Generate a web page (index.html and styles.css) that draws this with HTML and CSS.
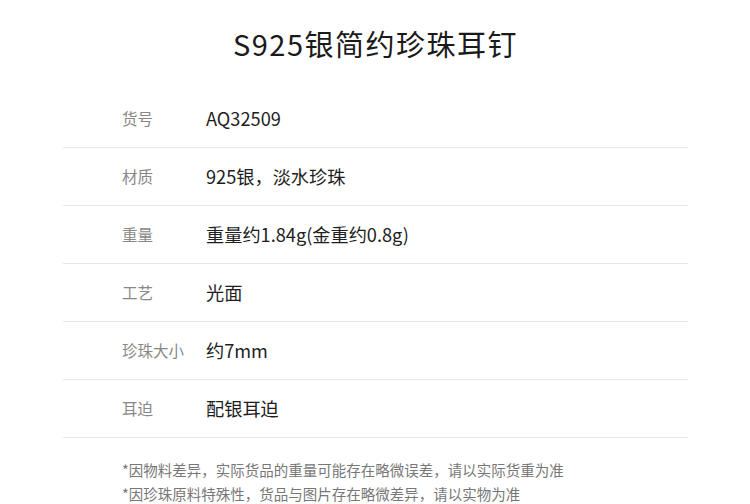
FILE: index.html
```html
<!DOCTYPE html>
<html lang="zh-CN">
<head>
<meta charset="utf-8">
<title>S925银简约珍珠耳钉</title>
<link rel="stylesheet" href="styles.css">
</head>
<body>
<div class="page">
  <h1 class="title">S925银简约珍珠耳钉</h1>
  <div class="specs">
    <div class="row"><span class="label">货号</span><span class="value">AQ32509</span></div>
    <div class="row"><span class="label">材质</span><span class="value">925银，淡水珍珠</span></div>
    <div class="row"><span class="label">重量</span><span class="value">重量约1.84g(金重约0.8g)</span></div>
    <div class="row"><span class="label">工艺</span><span class="value">光面</span></div>
    <div class="row"><span class="label">珍珠大小</span><span class="value">约7mm</span></div>
    <div class="row"><span class="label">耳迫</span><span class="value">配银耳迫</span></div>
  </div>
  <div class="notes">
    <p>*因物料差异，实际货品的重量可能存在略微误差，请以实际货重为准</p>
    <p>*因珍珠原料特殊性，货品与图片存在略微差异，请以实物为准</p>
  </div>
</div>
</body>
</html>
```
FILE: styles.css
```css
html, body {
  margin: 0;
  padding: 0;
  background: #fff;
}
body {
  font-family: "Noto Sans CJK SC", "Noto Sans", sans-serif;
  color: #222;
}
.page {
  width: 625px;
  margin: 0 auto;
  padding-left: 1px;
}
.title {
  margin: 0;
  padding: 23px 0 27px;
  font-size: 29px;
  line-height: 40px;
  font-weight: 400;
  letter-spacing: 1.5px;
  text-align: center;
  color: #1a1a1a;
}
.specs {
  display: flex;
  flex-direction: column;
}
.row {
  box-sizing: border-box;
  display: flex;
  align-items: center;
  height: 58px;
  padding: 0 0 2px 59px;
  border-bottom: 1px solid #e8e8e8;
}
.label {
  width: 84px;
  font-size: 15.5px;
  color: #888;
}
.value {
  font-size: 18.2px;
  color: #1e1e1e;
}
.notes {
  padding: 20px 0 0 59px;
}
.notes p {
  margin: 0;
  font-size: 14.5px;
  line-height: 24px;
  color: #777;
}
```
